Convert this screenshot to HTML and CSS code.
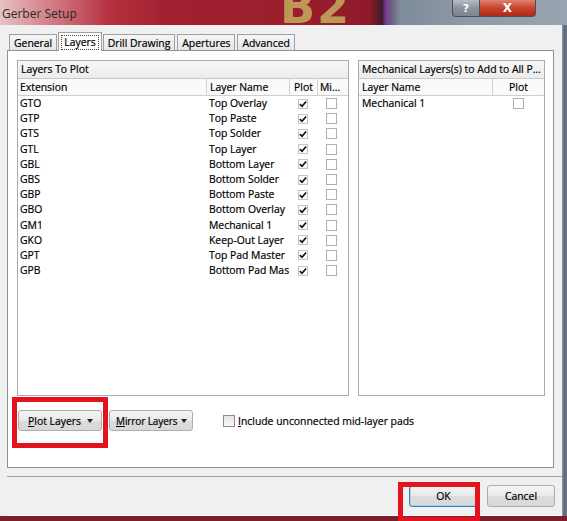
FILE: index.html
```html
<!DOCTYPE html>
<html>
<head>
<meta charset="utf-8">
<link rel="stylesheet" href="styles.css">
</head>
<body>
<div class="window">
  <div class="titlebar">
    <span class="title">Gerber Setup</span>
    <span class="bg-b2">B2</span>
    <span class="tb-spacer"></span>
    <span class="tb-btn help">?</span>
    <span class="tb-btn close">X</span>
    <span class="tb-end"></span>
  </div>
  <div class="main">
    <div class="client">
      <div class="tabs">
        <span class="tab">General</span>
        <span class="tab sel"><span class="focus">Layers</span></span>
        <span class="tab">Drill Drawing</span>
        <span class="tab">Apertures</span>
        <span class="tab">Advanced</span>
      </div>
      <div class="panel">
        <div class="boxes">
          <div class="box left">
            <div class="band">Layers To Plot</div>
            <div class="row head">
              <span class="c-ext">Extension</span>
              <span class="c-name">Layer Name</span>
              <span class="c-plot">Plot</span>
              <span class="c-mi">Mi...</span>
            </div>
            <div class="rows" id="rows"></div>
          </div>
          <div class="box right">
            <div class="band">Mechanical Layers(s) to Add to All P...</div>
            <div class="row head">
              <span class="m-name">Layer Name</span>
              <span class="m-plot">Plot</span>
            </div>
            <div class="row">
              <span class="m-name">Mechanical 1</span>
              <span class="m-plot"><span class="cb"></span></span>
            </div>
          </div>
        </div>
        <div class="controls">
          <span class="btn drop"><span><u>P</u>lot Layers</span><span class="arrow"></span></span>
          <span class="btn drop mirror"><span><u>M</u>irror Layers</span><span class="arrow"></span></span>
          <span class="chk"><span class="cb big"></span><span><u>I</u>nclude unconnected mid-layer pads</span></span>
        </div>
        <div class="hl hl-plot"></div>
      </div>
      <div class="footer">
        <span class="btn ok">OK</span>
        <span class="btn cancel">Cancel</span>
        <div class="hl hl-ok"></div>
      </div>
    </div>
    <div class="rframe"></div>
  </div>
  <div class="bstrip"></div>
</div>
<script>
var data=[["GTO","Top Overlay"],["GTP","Top Paste"],["GTS","Top Solder"],["GTL","Top Layer"],["GBL","Bottom Layer"],["GBS","Bottom Solder"],["GBP","Bottom Paste"],["GBO","Bottom Overlay"],["GM1","Mechanical 1"],["GKO","Keep-Out Layer"],["GPT","Top Pad Master"],["GPB","Bottom Pad Mas"]];
var h="";
var chk='<svg width="9" height="8" viewBox="0 0 9 8"><path d="M1 4.2 L3.4 6.6 L8 1.2" fill="none" stroke="#111" stroke-width="1.9"/></svg>';
data.forEach(function(d){
  h+='<div class="row"><span class="c-ext">'+d[0]+'</span><span class="c-name">'+d[1]+'</span><span class="c-plot"><span class="cb on">'+chk+'</span></span><span class="c-mi"><span class="cb"></span></span></div>';
});
document.getElementById("rows").innerHTML=h;
</script>
</body>
</html>
```
FILE: styles.css
```css
html, body { margin: 0; padding: 0; }
body {
  width: 567px; height: 521px; overflow: hidden;
  font-family: "Open Sans", "Noto Sans", sans-serif;
  font-size: 10.4px; color: #000;
  -webkit-text-stroke: 0.2px #000;
  background: #f0f0f0;
}
.window { width: 567px; height: 521px; display: flex; flex-direction: column; }

.titlebar {
  height: 25px; flex: none; display: flex; align-items: flex-start; overflow: hidden;
  -webkit-text-stroke: 0;
  background: linear-gradient(90deg, #e6c2c4 0px, #d88b92 40px, #b6303f 110px, #a0202f 170px, #9a1e2c 300px, #8e1a2a 370px, #3d1d2c 382px, #7d3aa0 386px, #6a5a80 390px, #7e8b9b 400px, #8e9aa8 470px, #9aa4b0 567px);
}
.title { width: 278px; padding: 5px 0 0 2px; font-size: 12px; color: #2a2a2a; flex: none; }
.bg-b2 {
  font-family: "DejaVu Sans", sans-serif; font-size: 46px; line-height: 30px; font-weight: bold;
  color: rgba(200, 186, 100, 0.8); margin-top: -8px; letter-spacing: 2px; flex: none;
}
.tb-spacer { flex: 1; }
.tb-btn {
  height: 17px; display: flex; align-items: center; justify-content: center;
  font-family: "DejaVu Sans", sans-serif; font-weight: bold; font-size: 11px; color: #fff;
  border: 1px solid #4a4f58; border-top: none; box-sizing: border-box; flex: none;
}
.help { width: 28px; border-radius: 0 0 0 4px; background: linear-gradient(#b5bcc4, #8c949e 50%, #7c858f); }
.close { width: 56px; border-left: none; border-radius: 0 0 4px 0; background: linear-gradient(#e08070, #c8442e 50%, #b02818); font-size: 12px; }
.tb-end { width: 31px; flex: none; }

.main { flex: 1; display: flex; min-height: 0; }
.client { width: 562px; flex: none; padding: 7px 0 0 7px; box-sizing: border-box; background: #f0f0f0; }
.rframe { flex: 1; background: linear-gradient(90deg, #98a2ac, #5c6876 40%, #6c7888); }
.bstrip { height: 5px; flex: none; background: #7c1e2c; }

.tabs { display: flex; align-items: flex-end; height: 18px; padding-left: 2px; position: relative; z-index: 1; }
.tab {
  height: 16px; box-sizing: border-box; padding: 0 4px; margin-right: 2px;
  border: 1px solid #a0a0a0; border-bottom: none; background: linear-gradient(#f6f6f6, #e6e6e6);
  display: flex; align-items: center; line-height: 14px;
}
.tab.sel { height: 19px; margin-bottom: -1px; background: #fff; padding: 0 3px; margin-left: -1px; margin-right: 1px; }
.focus { outline: 1px dotted #444; padding: 0 2px; line-height: 13px; }

.panel {
  width: 547px; height: 418px; box-sizing: border-box; border: 1px solid #8e9196;
  background: #fff; padding: 9px 0 0 9px; position: relative;
}
.boxes { display: flex; gap: 9px; height: 336px; }
.box { border: 1px solid #a8abb0; box-sizing: border-box; height: 336px; background: #fff; }
.box.left { width: 332px; }
.box.right { width: 187px; }
.band { height: 17px; line-height: 17px; padding-left: 3px; background: linear-gradient(#f7f7f7, #ececec); border-bottom: 1px solid #c8c8c8; white-space: nowrap; overflow: hidden; }
.row { display: flex; height: 15.2px; line-height: 15.2px; white-space: nowrap; }
.row.head { height: 16px; line-height: 16px; border-bottom: 1px solid #cfcfcf; background: #fafafa; }
.row span { overflow: hidden; box-sizing: border-box; }
.c-ext { width: 188px; padding-left: 2px; }
.c-name { width: 83px; padding-left: 3px; }
.c-plot { width: 28px; display: flex; justify-content: center; align-items: center; }
.c-mi { width: 31px; display: flex; justify-content: center; align-items: center; padding-right: 2px; }
.head .c-name, .head .c-plot, .head .m-plot { border-left: 1px solid #d4d4d4; }
.head .c-mi { border-left: 1px solid #d4d4d4; padding-left: 2px; justify-content: flex-start; }
.m-name { width: 133px; padding-left: 3px; }
.m-plot { flex: 1; display: flex; justify-content: center; align-items: center; }
.cb { width: 11px; height: 11px; border: 1px solid #b0b0b0; box-sizing: border-box; background: #fff; display: inline-flex; align-items: center; justify-content: center; }
.cb.on { width: 10px; height: 10px; border-color: #c4c4c4; }
.cb.big { width: 12px; height: 12px; border-color: #8a8a8a; background: linear-gradient(#e4e4e4, #fafafa); margin-right: 3px; }

.controls { display: flex; align-items: center; margin-top: 14px; padding-left: 1px; height: 21px; }
.btn {
  box-sizing: border-box; height: 21px; border: 1px solid #adadad; border-radius: 3px;
  background: linear-gradient(#f4f4f4, #e9e9e9 50%, #dcdcdc 51%, #d8d8d8);
  display: inline-flex; align-items: center; justify-content: center; color: #000;
}
.drop { width: 84px; justify-content: space-between; padding: 0 8px 0 9px; margin-right: 7px; }
.drop.mirror { padding: 0 5px 0 6px; margin-right: 30px; font-size: 10px; letter-spacing: -0.1px; }
.arrow { width: 0; height: 0; border-left: 3.5px solid transparent; border-right: 3.5px solid transparent; border-top: 4px solid #222; }
.chk { display: inline-flex; align-items: center; }

.footer { position: relative; margin-top: 8px; border-top: 1px solid #a0a0a0; box-shadow: 0 1px 0 #fff; height: 39px; display: flex; justify-content: flex-end; align-items: flex-start; padding: 8px 7px 0 0; box-sizing: border-box; width: 555px; }
.ok { width: 69px; height: 22px; border-color: #3c7fb1; box-shadow: inset 0 0 0 1px #a6d2f0; margin-right: 9px; }
.cancel { width: 68px; height: 22px; }

.hl { position: absolute; border: 5px solid #e3141e; box-sizing: border-box; pointer-events: none; }
.hl-plot { left: 4px; top: 346px; width: 96px; height: 51px; }
.hl-ok { left: 391px; top: 5px; width: 82px; height: 40px; }
```
